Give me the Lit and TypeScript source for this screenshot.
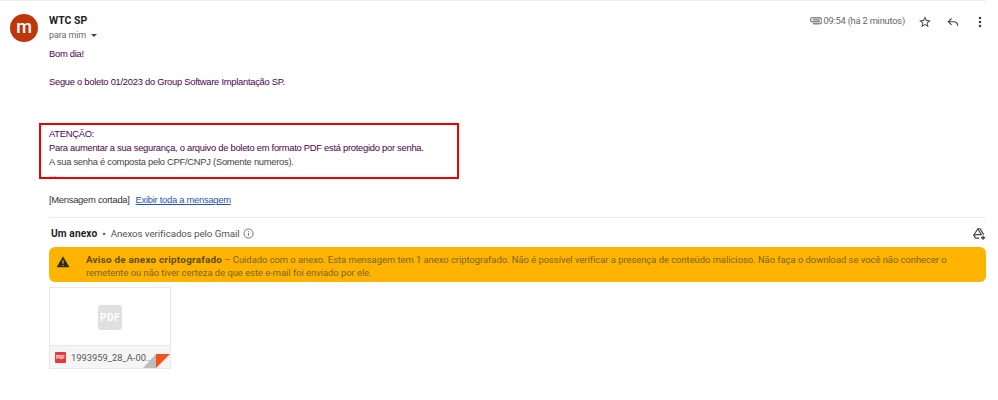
import { LitElement, html, css } from "lit";
import { customElement } from "lit/decorators.js";

@customElement("app-root")
export class AppRoot extends LitElement {
  static styles = css`
    :host { display: block; width: 998px; height: 400px; background: #fff; overflow: hidden; font-family: "Liberation Sans", Arial, sans-serif; box-sizing: border-box; }
    * { box-sizing: border-box; }
    .page { width: 986px; border-top: 1px solid #eeeeee; padding: 13px 0 0 10px; display: grid; grid-template-columns: 28px 1fr; column-gap: 11px; height: 400px; }
    .avatar { width: 28px; height: 28px; border-radius: 50%; background: #bf360c; color: #fff; display: flex; align-items: center; justify-content: center; font: 500 18px Roboto, sans-serif; padding-bottom: 3px; }
    .head { display: flex; justify-content: space-between; height: 33px; }
    .name { font: 700 10.5px/13px Roboto, sans-serif; color: #1f1f1f; }
    .to { font: 400 9px/12px Roboto, sans-serif; color: #6a6a6a; margin-top: 2px; display: flex; align-items: center; gap: 4px; letter-spacing: -.1px; }
    .caret { width: 0; height: 0; border-left: 3px solid transparent; border-right: 3px solid transparent; border-top: 3px solid #444; margin: 1px 0 0 1px; }
    .actions { display: flex; align-items: flex-start; color: #5e5e5e; }
    .time { font: 400 9.3px/13px Roboto, sans-serif; color: #666; margin-left: 1px; margin-right: 13px; letter-spacing: -.2px; }
    .actions svg { display: block; }
    .act { margin-top: 1px; margin-right: 14px; }
    .act.reply { margin-right: 13px; }
    .act.last { margin-right: -1px; }
    .msg { font: 400 9.4px/13.7px "Liberation Sans", Arial, sans-serif; letter-spacing: -.27px; color: #500050; }
    .msg p { margin: 0; }
    .gap1 { height: 14px; }
    .gap2 { height: 35px; }
    .alert { margin: 0 0 0 -10px; width: 420px; height: 56px; border: 2px solid #f00000; padding: 2px 0 0 8px; }
    .dark { color: #444; }
    .dots { color: #999; line-height: 10px; margin-top: 3px; letter-spacing: 0; }
    .clipped { font: 400 9.4px/13px "Liberation Sans", Arial, sans-serif; letter-spacing: -.27px; color: #333; margin-top: 14px; display: flex; gap: 6px; }
    .clipped a { color: #1a56c4; text-decoration: underline; }
    hr { border: 0; border-top: 1px solid #eeeeee; margin: 11px 0 0; }
    .att-head { display: flex; align-items: center; height: 29px; padding: 2px 0 0 2px; font: 400 9.8px Roboto, sans-serif; color: #555; letter-spacing: -.1px; }
    .att-head b { font-weight: 700; font-size: 10.2px; letter-spacing: .1px; color: #1f1f1f; }
    .sep { margin: 0 5px; font-weight: 700; }
    .att-head .info { margin-left: 3px; }
    .att-head .drive { margin-left: auto; }
    .banner { height: 35px; border-radius: 6px; background: #fdb300; display: grid; grid-template-columns: 37px 1fr; font: 400 9.4px/13px Roboto, sans-serif; color: #7a6414; padding: 6px 30px 0 0; letter-spacing: -.015px; }
    .banner svg { margin: 2px 0 0 7px; }
    .banner b { font-weight: 700; font-size: 9.8px; letter-spacing: .27px; color: #5d4c10; }
    .card { margin-top: 5px; width: 122px; height: 82px; border: 1px solid #e8e8e8; display: grid; grid-template-rows: 58px 1fr; }
    .thumb { display: flex; align-items: center; justify-content: center; border-bottom: 1px solid #e8e8e8; padding-top: 2px; }
    .pdf { width: 24px; height: 25px; border-radius: 3px; background: #e0e0e0; color: #fff; font: 700 10px Roboto, sans-serif; display: flex; align-items: center; justify-content: center; letter-spacing: .6px; }
    .foot { position: relative; background: #f5f5f5; display: flex; align-items: center; padding: 0 0 0 5px; gap: 5px; font: 400 9.3px Roboto, sans-serif; color: #555; letter-spacing: .03px; }
    .mini { width: 11px; height: 11px; border-radius: 1px; background: #e53935; color: #fff; font: 700 4.5px Roboto, sans-serif; display: flex; align-items: center; justify-content: center; letter-spacing: 0; }
    .fold { position: absolute; right: 0; bottom: 0; }
  `;

  render() {
    return html`<div class="page">
      <div class="avatar">m</div>
      <div>
        <div class="head">
          <div>
            <div class="name">WTC SP</div>
            <div class="to">para mim <span class="caret"></span></div>
          </div>
          <div class="actions">
            <svg width="13" height="13" viewBox="0 0 26 24" fill="none" stroke="#8a8a8a" stroke-width="2.6"><path d="M8 18.500h12a6 6 0 0 0 0-12H7a4 4 0 0 0 0 8h12a2 2 0 0 0 0-4H8"/></svg>
            <span class="time">09:54 (há 2 minutos)</span>
            <svg class="act" width="14" height="14" viewBox="0 0 24 24" fill="#444"><path d="M22 9.24l-7.19-.62L12 2 9.19 8.630 2 9.24l5.46 4.73L5.820 21 12 17.27 18.18 21l-1.63-7.03L22 9.24zM12 15.4l-3.76 2.27 1-4.28-3.32-2.88 4.38-.38L12 6.1l1.71 4.04 4.38.38-3.32 2.88 1 4.28L12 15.4z"/></svg>
            <svg class="act reply" width="14" height="14" viewBox="0 0 24 24"><path d="M9.500 6L4 11.500 9.500 17M4 11.500h9c4 0 7 2.500 7 7" fill="none" stroke="#444" stroke-width="2"/></svg>
            <svg class="act last" width="14" height="14" viewBox="0 0 24 24" fill="#444"><circle cx="12" cy="5" r="2.2"/><circle cx="12" cy="12" r="2.2"/><circle cx="12" cy="19" r="2.2"/></svg>
          </div>
        </div>
        <div class="msg">
          <p>Bom dia!</p>
          <div class="gap1"></div>
          <p>Segue o boleto 01/2023 do Group Software Implantação SP.</p>
          <div class="gap2"></div>
          <div class="alert">
            <p>ATENÇÃO:</p>
            <p>Para aumentar a sua segurança, o arquivo de boleto em formato PDF está protegido por senha.</p>
            <p class="dark">A sua senha é composta pelo CPF/CNPJ (Somente numeros).</p>
            <p class="dots">...</p>
          </div>
        </div>
        <div class="clipped"><span>[Mensagem cortada]</span><a>Exibir toda a mensagem</a></div>
        <hr />
        <div class="att-head">
          <b>Um anexo</b><span class="sep">•</span><span>Anexos verificados pelo Gmail</span>
          <svg class="info" width="11" height="11" viewBox="0 0 24 24" fill="none" stroke="#666" stroke-width="2"><circle cx="12" cy="12" r="10"/><path d="M12 11v6M12 7v2"/></svg>
          <svg class="drive" width="14" height="14" viewBox="0 0 24 24" fill="none" stroke="#444" stroke-width="2"><path d="M12 19H6l-3-5 7-11h4l6 10"/><path d="M10 3l6 10H8M3 14l5-1"/><path d="M19 15v7M15.500 18.500h7" stroke-width="2.400"/></svg>
        </div>
        <div class="banner">
          <svg width="14" height="14" viewBox="0 0 24 24" fill="#2b2b20"><path d="M1 21h22L12 2z"/><path d="M11 9h2v6h-2zM11 17h2v2h-2z" fill="#fdb300"/></svg>
          <div><b>Aviso de anexo criptografado</b> – Cuidado com o anexo. Esta mensagem tem 1 anexo criptografado. Não é possível verificar a presença de conteúdo malicioso. Não faça o download se você não conhecer o remetente ou não tiver certeza de que este e-mail foi enviado por ele.</div>
        </div>
        <div class="card">
          <div class="thumb"><div class="pdf">PDF</div></div>
          <div class="foot">
            <span class="mini">PDF</span><span>1993959_28_A-00...</span>
            <svg class="fold" width="27" height="15" viewBox="0 0 27 15"><path d="M0 15L13 1V15z" fill="#bdbdbd"/><path d="M13 15V1H27z" fill="#f4511e"/></svg>
          </div>
        </div>
      </div>
    </div>`;
  }
}
